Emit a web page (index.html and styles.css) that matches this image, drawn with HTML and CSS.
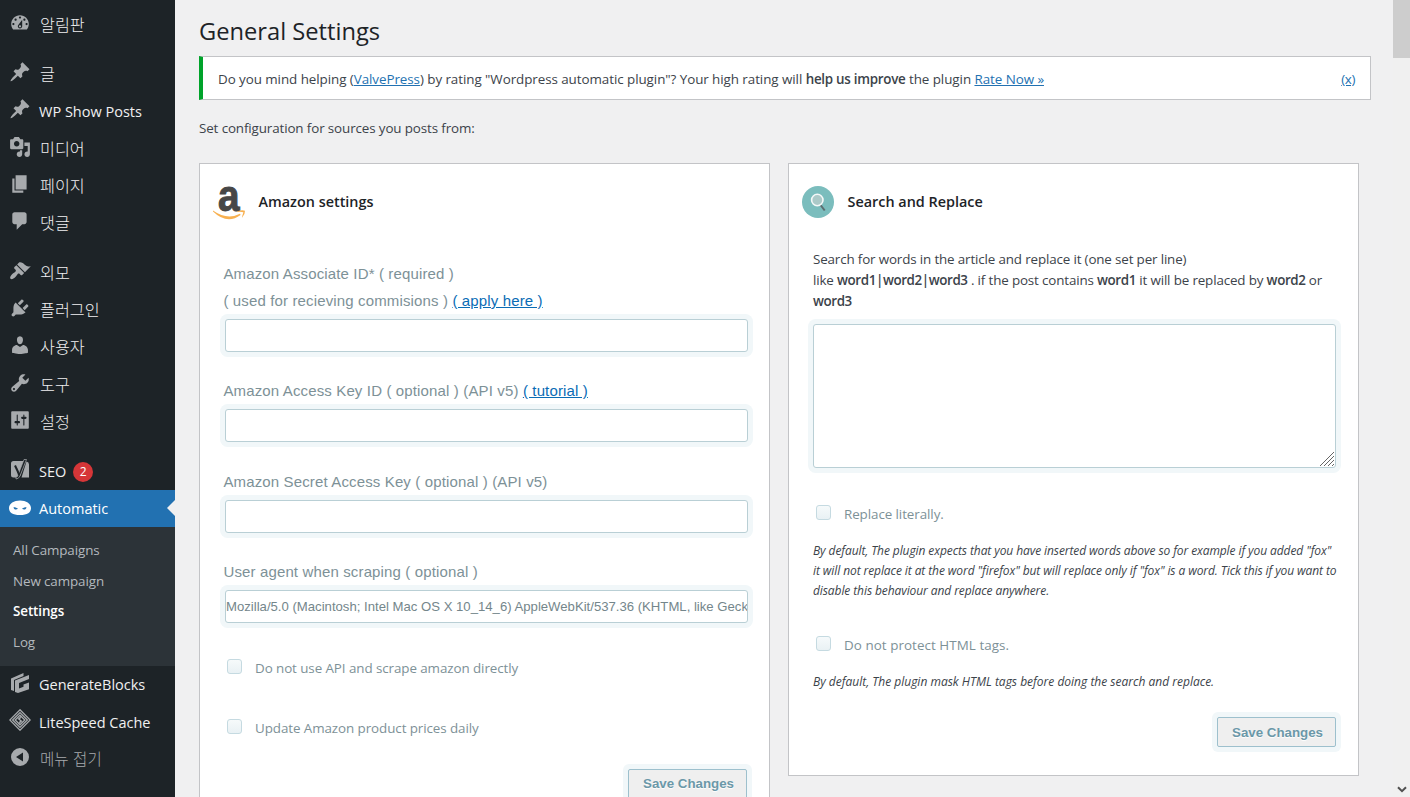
FILE: index.html
```
<!DOCTYPE html>
<html lang="ko">
<head>
  <meta charset="UTF-8" />
  <meta name="viewport" content="width=device-width, initial-scale=1" />
  <title>General Settings</title>
  <link rel="stylesheet" href="styles.css">
</head>
<body>

  <nav class="sidebar">
    <ul class="menu">
      <li class="item ko"><svg class="icon" viewBox="0 0 20 20"><path fill-rule="evenodd" d="M3.76 16h12.48c1.1-1.37 1.76-3.11 1.76-5 0-4.42-3.58-8-8-8s-8 3.58-8 8c0 1.89.66 3.63 1.76 5zM10 4c.55 0 1 .45 1 1s-.45 1-1 1-1-.45-1-1 .45-1 1-1zM6 6c.55 0 1 .45 1 1s-.45 1-1 1-1-.45-1-1 .45-1 1-1zm8 0c.55 0 1 .45 1 1s-.45 1-1 1-1-.45-1-1 .45-1 1-1zm-5.37 5.55L12 7v6c0 1.1-.9 2-2 2s-2-.9-2-2c0-.57.24-1.08.63-1.45zM4 10c.55 0 1 .45 1 1s-.45 1-1 1-1-.45-1-1 .45-1 1-1zm12 0c.55 0 1 .45 1 1s-.45 1-1 1-1-.45-1-1 .45-1 1-1zm-5 3c0-.55-.45-1-1-1s-1 .45-1 1 .45 1 1 1 1-.45 1-1z"/></svg><span>알림판</span></li>
      <li class="separator"></li>
      <li class="item ko"><svg class="icon" viewBox="0 0 20 20"><path d="M10.44 3.02l1.82-1.82 6.36 6.35-1.83 1.82c-1.05-.68-2.48-.57-3.41.36l-.75.75c-.92.93-1.04 2.35-.35 3.41l-1.83 1.82-2.41-2.41-2.8 2.79c-.42.42-3.38 2.71-3.8 2.29s1.86-3.39 2.28-3.81l2.79-2.79L4.1 9.36l1.83-1.82c1.05.69 2.48.57 3.4-.36l.75-.75c.93-.92 1.05-2.35.36-3.41z"/></svg><span>글</span></li>
      <li class="item"><svg class="icon" viewBox="0 0 20 20"><path d="M10.44 3.02l1.82-1.82 6.36 6.35-1.83 1.82c-1.05-.68-2.48-.57-3.41.36l-.75.75c-.92.93-1.04 2.35-.35 3.41l-1.83 1.82-2.41-2.41-2.8 2.79c-.42.42-3.38 2.71-3.8 2.29s1.86-3.39 2.28-3.81l2.79-2.79L4.1 9.36l1.83-1.82c1.05.69 2.48.57 3.4-.36l.75-.75c.93-.92 1.05-2.35.36-3.41z"/></svg><span>WP Show Posts</span></li>
      <li class="item ko"><svg class="icon" viewBox="0 0 20 20"><path fill-rule="evenodd" d="M13 11V4c0-.55-.45-1-1-1h-1.67L9 1H5L3.67 3H2c-.55 0-1 .45-1 1v7c0 .55.45 1 1 1h10c.55 0 1-.45 1-1zM7 4.5c1.38 0 2.5 1.12 2.5 2.5S8.38 9.5 7 9.5 4.5 8.38 4.5 7 5.62 4.5 7 4.5zM14 6h5v10.5c0 1.38-1.12 2.5-2.5 2.5S14 17.88 14 16.5s1.12-2.5 2.5-2.5c.17 0 .34.02.5.05V9h-3V6zm-4 8.05V13h2v3.5c0 1.38-1.12 2.5-2.5 2.5S7 17.88 7 16.5 8.12 14 9.5 14c.17 0 .34.02.5.05z"/></svg><span>미디어</span></li>
      <li class="item ko"><svg class="icon" viewBox="0 0 20 20"><path d="M6 15V2h10v13H6zm-1 1h8v2H3V5h2v11z"/></svg><span>페이지</span></li>
      <li class="item ko"><svg class="icon" viewBox="0 0 20 20"><path d="M5 2h9c1.1 0 2 .9 2 2v7c0 1.1-.9 2-2 2h-2l-5 5v-5H5c-1.1 0-2-.9-2-2V4c0-1.1.9-2 2-2z"/></svg><span>댓글</span></li>
      <li class="separator"></li>
      <li class="item ko"><svg class="icon" viewBox="0 0 20 20"><path d="M14.48 11.06L7.41 3.99l1.5-1.5c.5-.56 2.3-.47 3.51.32 1.21.8 1.43 1.28 2.91 2.1 1.18.64 2.45 1.26 4.45.85zm-.71.71L6.7 4.7 4.93 6.47c-.39.39-.39 1.02 0 1.41l1.06 1.06c.39.39.39 1.03 0 1.42-.6.6-1.43 1.11-2.21 1.69-.35.26-.7.53-1.01.84C1.43 14.23.4 16.08 1.4 17.07c.99 1 2.84-.03 4.18-1.36.31-.31.58-.66.85-1.02.57-.78 1.08-1.61 1.69-2.21.39-.39 1.02-.39 1.41 0l1.06 1.06c.39.39 1.02.39 1.41 0z"/></svg><span>외모</span></li>
      <li class="item ko"><svg class="icon" viewBox="0 0 20 20"><path d="M13.11 4.36L9.87 7.6 8 5.73l3.24-3.24c.35-.34 1.05-.2 1.56.32.52.51.66 1.21.31 1.55zm-8 1.77l.91-1.12 9.01 9.01-1.19.84c-.71.71-2.63 1.16-3.82 1.16H6.14L4.9 17.26c-.59.59-1.54.59-2.12 0-.59-.58-.59-1.53 0-2.12l1.24-1.24v-3.88c0-1.13.4-3.19 1.09-3.89zm7.26 3.97l3.24-3.24c.34-.35 1.04-.21 1.55.31.52.51.66 1.21.31 1.55l-3.24 3.25z"/></svg><span>플러그인</span></li>
      <li class="item ko"><svg class="icon" viewBox="0 0 20 20"><path d="M10 9.25c-2.27 0-2.73-3.44-2.73-3.44C7 4.02 7.82 2 9.97 2c2.16 0 2.98 2.02 2.71 3.81 0 0-.41 3.44-2.68 3.44zm0 2.57L12.72 10c2.39 0 4.52 2.33 4.52 4.53v2.49s-3.65 1.13-7.24 1.13c-3.65 0-7.24-1.13-7.24-1.13v-2.49c0-2.25 1.94-4.48 4.47-4.48z"/></svg><span>사용자</span></li>
      <li class="item ko"><svg class="icon" viewBox="0 0 20 20"><path fill-rule="evenodd" d="M16.68 9.77c-1.34 1.34-3.3 1.67-4.95.99l-5.41 6.52c-.99.99-2.59.99-3.58 0s-.99-2.59 0-3.57l6.52-5.42c-.68-1.65-.35-3.61.99-4.95 1.28-1.28 3.12-1.62 4.72-1.06l-2.89 2.89 2.82 2.82 2.86-2.87c.53 1.58.18 3.39-1.08 4.65zM3.81 16.21c.4.39 1.04.39 1.43 0 .4-.4.4-1.04 0-1.43-.39-.4-1.03-.4-1.43 0-.39.39-.39 1.03 0 1.43z"/></svg><span>도구</span></li>
      <li class="item ko"><svg class="icon" viewBox="0 0 20 20"><path fill-rule="evenodd" d="M3 2h14c.55 0 1 .45 1 1v14c0 .55-.45 1-1 1H3c-.55 0-1-.45-1-1V3c0-.55.45-1 1-1zM8 11h1c.55 0 1 .45 1 1s-.45 1-1 1H8v1.500c0 .28-.22.5-.5.5s-.5-.22-.5-.5V13H6c-.55 0-1-.45-1-1s.45-1 1-1h1V5.500c0-.28.22-.5.5-.5s.5.22.5.5V11zm5-2h-1c-.55 0-1-.45-1-1s.45-1 1-1h1V5.500c0-.28.22-.5.5-.5s.5.22.5.5V7h1c.55 0 1 .45 1 1s-.45 1-1 1h-1v5.500c0 .28-.22.5-.5.5s-.5-.22-.5-.5V9z"/></svg><span>설정</span></li>
      <li class="separator"></li>
      <li class="item"><svg class="icon" viewBox="0 0 22 22"><path d="M4.500 3H16L11.500 17.500Q10.500 19.500 8 19.500H4.500Q2 19.500 2 17V5.500Q2 3 4.500 3zM17.500 3.500Q20 4 20 6.500V19.500H12.500z"/><path class="yoast-line" d="M7 7.500l3 7L15 1.500h2.500L11 18q-1.500 3-4 3v-2q1.500 0 2-1.500"/><path class="yoast-y" d="M6 7.500l3.500 7.500"/></svg><span>SEO</span><b class="badge">2</b></li>
      <li class="item current"><svg class="icon" viewBox="0 0 22 22"><path fill-rule="evenodd" d="M11 3.500c6 0 11 3 11 7.500s-3.500 7-11 7S0 15.500 0 11s5-7.500 11-7.500zM4.500 10.200c.3 2.300 2.500 3.100 4.500 1.600-.8-1.100-2.500-1.600-4.500-1.600zM17.500 10.200c-2 0-3.700.5-4.500 1.600 2 1.500 4.200.7 4.500-1.600z"/></svg><span>Automatic</span></li>
    </ul>
    <ul class="submenu">
      <li>All Campaigns</li>
      <li>New campaign</li>
      <li class="active">Settings</li>
      <li>Log</li>
    </ul>
    <ul class="menu">
      <li class="item"><svg class="icon" viewBox="0 0 22 22"><path d="M2 6.500L14.500 1v3L5 8v11l-3-1zM6 8.500L20 3v4L10 11v5.500l4.500-1.800V12.500l5.500-2v6.700L9 21l-3-1z"/></svg><span>GenerateBlocks</span></li>
      <li class="item"><svg class="icon" viewBox="0 0 22 22"><g class="diamonds"><path d="M11 .8L21.200 11 11 21.200.8 11z"/><path d="M11 3.600L18.400 11 11 18.400 3.600 11z"/><path d="M11 6.200L15.800 11 11 15.800 6.200 11z"/></g><path d="M12.500 6.500L8.500 10l2.300 1.500-1.300 4 4-3.500-2.300-1.500z"/></svg><span>LiteSpeed Cache</span></li>
      <li class="item ko collapse"><svg class="icon" viewBox="0 0 22 22"><path fill-rule="evenodd" d="M11 2a9 9 0 1 0 0 18 9 9 0 0 0 0-18zM14 6.500v9L7 11z"/></svg><span>메뉴 접기</span></li>
    </ul>
  </nav>

  <main class="content">
    <h1>General Settings</h1>
    <div class="notice">
      <p>Do you mind helping (<a href="#">ValvePress</a>) by rating "Wordpress automatic plugin"? Your high rating will <b>help us improve</b> the plugin <a href="#">Rate Now »</a></p>
      <a class="dismiss" href="#">(x)</a>
    </div>
    <p class="intro">Set configuration for sources you posts from:</p>

    <div class="boxes">
      <section class="box">
        <h2>
          <svg class="logo" viewBox="0 0 32 36"><text class="amazon-a" transform="scale(.88 1)" x="5.800" y="27.300">a</text><path class="smile" d="M0 26.500Q14 36.500 27 29.800l.6 1.300Q14 41 0 27.500z"/><path class="smile" d="M24 27.600q4.500-2 8-.9.200 3.800-3 7-.3-.2 1.400-5.500-2.500-.6-6.400-.2z"/></svg>
          <span>Amazon settings</span>
        </h2>
        <div class="fields">
          <div class="field">
            <label>Amazon Associate ID* ( required )<br>( used for recieving commisions ) <a href="#">( apply here )</a></label>
            <input type="text">
          </div>
          <div class="field">
            <label>Amazon Access Key ID ( optional ) (API v5) <a href="#">( tutorial )</a></label>
            <input type="text">
          </div>
          <div class="field">
            <label>Amazon Secret Access Key ( optional ) (API v5)</label>
            <input type="text">
          </div>
          <div class="field">
            <label>User agent when scraping ( optional )</label>
            <input type="text" value="Mozilla/5.0 (Macintosh; Intel Mac OS X 10_14_6) AppleWebKit/537.36 (KHTML, like Gecko) Chrome/85.0">
          </div>
          <div class="check"><i class="checkbox"></i>Do not use API and scrape amazon directly</div>
          <div class="check second"><i class="checkbox"></i>Update Amazon product prices daily</div>
          <button class="save">Save Changes</button>
        </div>
      </section>

      <section class="box box-right">
        <h2>
          <svg class="logo" viewBox="0 0 32 36"><circle class="disc" cx="16" cy="18" r="16"/><path class="handle" d="M18.500 21l4.200 5.500"/><circle class="lens" cx="15.300" cy="16" r="5.700"/></svg>
          <span>Search and Replace</span>
        </h2>
        <div class="fields">
          <p class="text">Search for words in the article and replace it (one set per line)<br>like <b>word1|word2|word3</b> . if the post contains <b>word1</b> it will be replaced by <b>word2</b> or<br><b>word3</b></p>
          <div class="textarea"><svg class="grip" viewBox="0 0 14 14"><path d="M0 14L14 0M4 14L14 4M8 14l6-6M12 14l2-2"/></svg></div>
          <div class="check"><i class="checkbox"></i>Replace literally.</div>
          <p class="hint">By default, The plugin expects that you have inserted words above so for example if you added "fox"<br>it will not replace it at the word "firefox" but will replace only if "fox" is a word. Tick this if you want to<br>disable this behaviour and replace anywhere.</p>
          <div class="check second"><i class="checkbox"></i>Do not protect HTML tags.</div>
          <p class="hint short">By default, The plugin mask HTML tags before doing the search and replace.</p>
          <button class="save">Save Changes</button>
        </div>
      </section>
    </div>
  </main>

  <div class="scrollbar">
    <div class="thumb"></div>
    <svg class="chevron" viewBox="0 0 10 7"><path d="M1 1.200l4 4 4-4"/></svg>
  </div>

</body>
</html>
```
FILE: styles.css
```
* {
  box-sizing: border-box;
}
body {
  margin: 0;
  height: 797px;
  display: flex;
  overflow: hidden;
  background: #f0f0f1;
  color: #3c434a;
  font-family: "Open Sans", "Noto Sans CJK KR", sans-serif;
  font-size: 13.4px;
}
ul, p, h1, h2 {
  margin: 0;
  padding: 0;
  list-style: none;
}
p, h1, h2, li, label {
  white-space: nowrap;
}
b {
  font-weight: 600;
}
a {
  color: #2271b1;
}

/* sidebar */
.sidebar {
  width: 175px;
  flex: none;
  padding-top: 6px;
  background: #1d2327;
  color: #f0f0f1;
}
.item {
  display: flex;
  align-items: center;
  height: 37.3px;
  padding-left: 9px;
  font-size: 14.5px;
}
.item.ko {
  font-family: "Noto Sans CJK KR", sans-serif;
  font-weight: 300;
  font-size: 16.2px;
}
.item.ko span {
  padding-bottom: 2px;
  padding-left: 1px;
}
.icon {
  width: 22px;
  height: 22px;
  margin-right: 8px;
  margin-bottom: 4px;
  fill: #a7aaad;
  flex: none;
}
.separator {
  height: 12.1px;
}
.yoast-line {
  fill: #1d2327;
  stroke: #a7aaad;
  stroke-width: .7;
}
.yoast-y {
  stroke: #1d2327;
  stroke-width: 2;
}
.badge {
  width: 20px;
  height: 20px;
  margin-top: 1px;
  margin-left: 7px;
  border-radius: 50%;
  background: #d63638;
  color: #fff;
  font-size: 12px;
  font-weight: 400;
  line-height: 20px;
  text-align: center;
}
.current {
  position: relative;
  background: #2271b1;
  color: #fff;
}
.current .icon {
  margin-bottom: 1px;
  fill: #fff;
}
.current::after {
  content: "";
  position: absolute;
  right: 0;
  top: 10px;
  border: 8.5px solid transparent;
  border-right-color: #f0f0f1;
  border-left: 0;
}
.submenu {
  height: 139px;
  padding: 9px 0 0 13px;
  background: #2c3338;
  color: #b4b9be;
  font-size: 13.4px;
  letter-spacing: -.1px;
}
.submenu li {
  height: 30.6px;
  line-height: 29.6px;
}
.submenu .active {
  color: #fff;
  font-weight: 600;
}
.item.collapse {
  color: #a7aaad;
  font-size: 15.6px;
}
.diamonds path {
  fill: none;
  stroke: #a7aaad;
  stroke-width: 1.3;
}

/* content */
.content {
  flex: 1;
  padding-left: 24px;
}
h1 {
  height: 56px;
  padding-top: 15px;
  color: #1d2327;
  font-size: 23.7px;
  font-weight: 400;
  line-height: 32px;
}
.notice {
  display: flex;
  justify-content: space-between;
  align-items: center;
  width: 1172px;
  height: 44px;
  padding: 2px 15px 0;
  border: 1px solid #c3c4c7;
  border-left: 4px solid #00a32a;
  background: #fff;
  letter-spacing: -.06px;
}
.notice b {
  letter-spacing: -.27px;
}
.notice .dismiss {
  letter-spacing: -.4px;
}
.intro {
  height: 63px;
  line-height: 57px;
  letter-spacing: -.12px;
}
.boxes {
  display: flex;
  align-items: flex-start;
  gap: 18px;
}
.box {
  width: 571px;
  height: 660px;
  border: 1px solid #c3c4c7;
  background: #fff;
}
.box-right {
  height: 613px;
}
h2 {
  display: flex;
  align-items: center;
  gap: 13.5px;
  height: 76px;
  padding-left: 13px;
  color: #1d2327;
  font-size: 14.4px;
  font-weight: 600;
}
h2 span {
  padding-bottom: 2px;
}
.logo {
  width: 32px;
  height: 36px;
  overflow: visible;
}
.amazon-a {
  fill: #474747;
  stroke: #474747;
  font: bold 44px "Liberation Sans", sans-serif;
}
.smile {
  fill: #f8b04f;
}
.disc {
  fill: #7bbdbd;
}
.handle {
  stroke: #5d6c70;
  stroke-width: 2;
}
.lens {
  fill: #abc9c8;
  stroke: #f4f8f8;
  stroke-width: 1.6;
}
.fields {
  display: flex;
  flex-direction: column;
  padding: 20px 21px 0 24px;
}
.box-right .fields {
  padding-right: 22px;
}
.field {
  display: flex;
  flex-direction: column;
  margin-bottom: 25.4px;
}
label {
  margin-left: -.6px;
  color: #7d9197;
  font: 15px/27px "Liberation Sans", Arial, sans-serif;
  letter-spacing: .14px;
}
label a {
  color: #0a6cb5;
}
input, .textarea {
  height: 33px;
  margin: 5px 0 0 1px;
  padding: 0;
  border: 1px solid #b9cfd5;
  border-radius: 3px;
  box-shadow: 0 0 0 5px #f1f7f9;
  background: #fff;
  color: #74868b;
  font: 13.15px "Liberation Sans", Arial, sans-serif;
}
.check {
  display: flex;
  align-items: center;
  gap: 13px;
  height: 30px;
  margin-top: 4px;
  padding-left: 3px;
  color: #7d9197;
  letter-spacing: -.08px;
}
.checkbox {
  width: 15px;
  height: 15px;
  margin-bottom: 3px;
  border: 1.5px solid #c5dae1;
  border-radius: 3px;
  background: linear-gradient(#f6fafb, #e9f1f4);
}
.second {
  margin-top: 30px;
}
.save {
  align-self: flex-end;
  width: 119px;
  height: 30px;
  margin: 26px 1px 0 0;
  padding: 0 0 0 2px;
  border: 1px solid #9dc0cd;
  border-radius: 2px;
  box-shadow: 0 0 0 5px #f1f7f9;
  background: #efefef;
  color: #6b98a8;
  font: bold 13.3px "Liberation Sans", Arial, sans-serif;
  text-shadow: 0 1px 1px #fff;
}
.text {
  margin-top: -11px;
  line-height: 21px;
  letter-spacing: -.15px;
}
.text b {
  letter-spacing: -.4px;
}
.textarea {
  display: flex;
  justify-content: flex-end;
  align-items: flex-end;
  height: 144px;
  margin: 12px 0 0;
  padding: 1px;
}
.grip {
  width: 14px;
  height: 14px;
  stroke: #666;
}
.box-right .check {
  margin-top: 31px;
}
.box-right .second {
  margin-top: 29px;
  letter-spacing: .06px;
}
.hint {
  margin-top: 12px;
  font-size: 12px;
  font-style: italic;
  line-height: 20px;
  letter-spacing: -.09px;
}
.short {
  letter-spacing: 0;
}
.box-right .save {
  margin: 25px 0 0;
}

/* browser scrollbar */
.scrollbar {
  display: flex;
  flex-direction: column;
  justify-content: space-between;
  align-items: center;
  width: 17px;
  padding-bottom: 4px;
  background: #f0f0f0;
}
.thumb {
  width: 17px;
  height: 58px;
  background: #cdcdcd;
}
.chevron {
  width: 10px;
  height: 7px;
  fill: none;
  stroke: #505050;
  stroke-width: 2;
}
```
